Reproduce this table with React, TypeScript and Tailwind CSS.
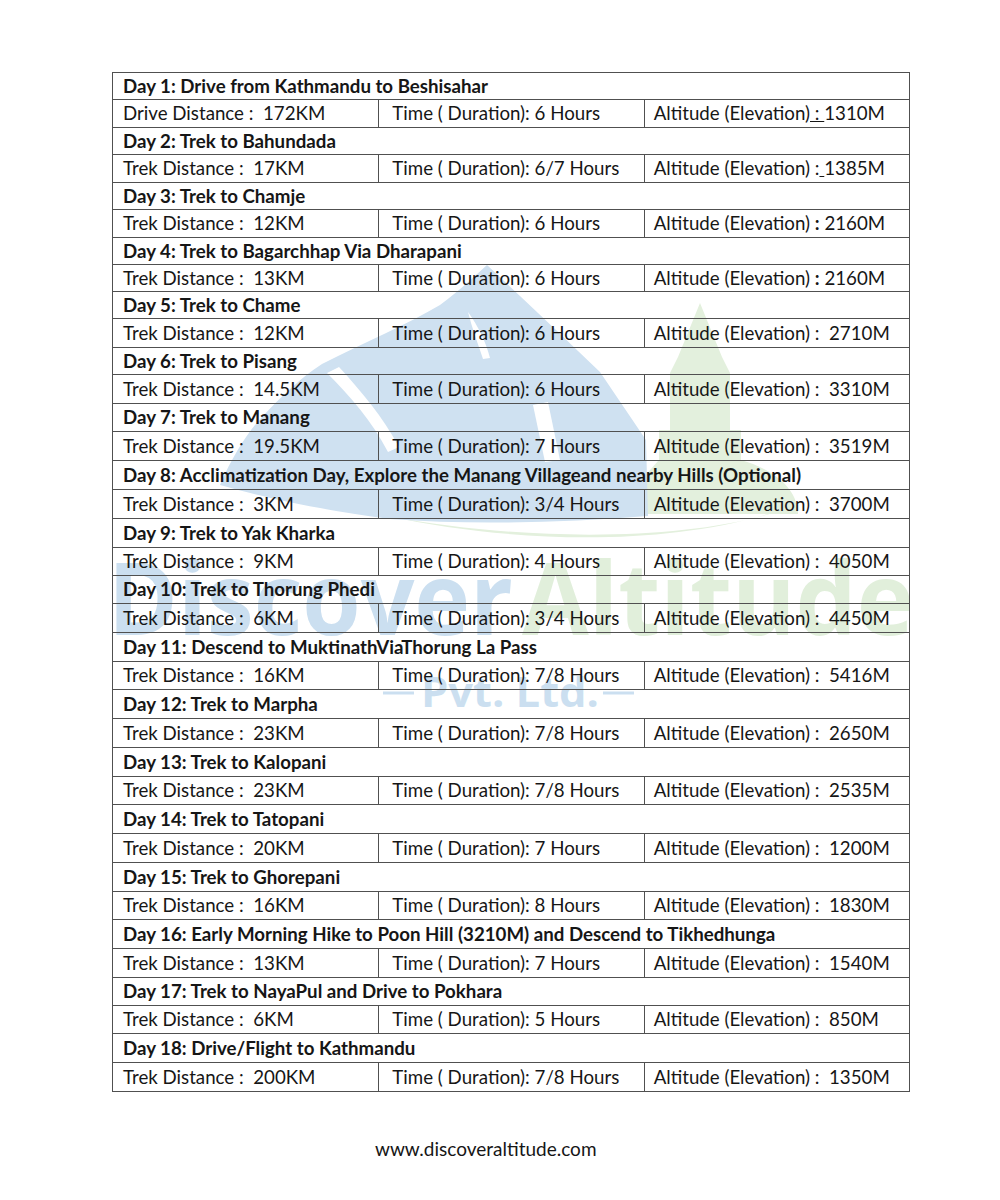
import React from "react";

type Day = {
  title: string;
  dist: string;
  time: string;
  alt: React.ReactNode;
};

const H: Record<number, string> = {
  27: "h-[27px]",
  28: "h-[28px]",
  29: "h-[29px]",
};

const heights = [
  27, 28, 27, 28, 27, 28, 27, 27, 27, 29, 27, 29, 28, 29, 29, 29, 29, 28, 28, 29, 29, 28, 29, 29, 29, 28, 29, 29, 29, 28,
  29, 29, 28, 28, 29, 29,
];

const alt = (v: string) => `Altitude (Elevation) :  ${v}`;

const days: Day[] = [
  {
    title: "Day 1: Drive from Kathmandu to Beshisahar",
    dist: "Drive Distance :  172KM",
    time: "Time ( Duration): 6 Hours",
    alt: (
      <>
        Altitude (Elevation)<span className="underline"> : </span>1310M
      </>
    ),
  },
  {
    title: "Day 2: Trek to Bahundada",
    dist: "Trek Distance :  17KM",
    time: "Time ( Duration): 6/7 Hours",
    alt: (
      <>
        Altitude (Elevation) :<span className="underline"> </span>1385M
      </>
    ),
  },
  {
    title: "Day 3: Trek to Chamje",
    dist: "Trek Distance :  12KM",
    time: "Time ( Duration): 6 Hours",
    alt: (
      <>
        Altitude (Elevation) <span className="font-bold">:</span> 2160M
      </>
    ),
  },
  {
    title: "Day 4: Trek to Bagarchhap Via Dharapani",
    dist: "Trek Distance :  13KM",
    time: "Time ( Duration): 6 Hours",
    alt: (
      <>
        Altitude (Elevation) <span className="font-bold">:</span> 2160M
      </>
    ),
  },
  { title: "Day 5: Trek to Chame", dist: "Trek Distance :  12KM", time: "Time ( Duration): 6 Hours", alt: alt("2710M") },
  { title: "Day 6: Trek to Pisang", dist: "Trek Distance :  14.5KM", time: "Time ( Duration): 6 Hours", alt: alt("3310M") },
  { title: "Day 7: Trek to Manang", dist: "Trek Distance :  19.5KM", time: "Time ( Duration): 7 Hours", alt: alt("3519M") },
  {
    title: "Day 8: Acclimatization Day, Explore the Manang Villageand nearby Hills (Optional)",
    dist: "Trek Distance :  3KM",
    time: "Time ( Duration): 3/4 Hours",
    alt: alt("3700M"),
  },
  { title: "Day 9: Trek to Yak Kharka", dist: "Trek Distance :  9KM", time: "Time ( Duration): 4 Hours", alt: alt("4050M") },
  { title: "Day 10: Trek to Thorung Phedi", dist: "Trek Distance :  6KM", time: "Time ( Duration): 3/4 Hours", alt: alt("4450M") },
  {
    title: "Day 11: Descend to MuktinathViaThorung La Pass",
    dist: "Trek Distance :  16KM",
    time: "Time ( Duration): 7/8 Hours",
    alt: alt("5416M"),
  },
  { title: "Day 12: Trek to Marpha", dist: "Trek Distance :  23KM", time: "Time ( Duration): 7/8 Hours", alt: alt("2650M") },
  { title: "Day 13: Trek to Kalopani", dist: "Trek Distance :  23KM", time: "Time ( Duration): 7/8 Hours", alt: alt("2535M") },
  { title: "Day 14: Trek to Tatopani", dist: "Trek Distance :  20KM", time: "Time ( Duration): 7 Hours", alt: alt("1200M") },
  { title: "Day 15: Trek to Ghorepani", dist: "Trek Distance :  16KM", time: "Time ( Duration): 8 Hours", alt: alt("1830M") },
  {
    title: "Day 16: Early Morning Hike to Poon Hill (3210M) and Descend to Tikhedhunga",
    dist: "Trek Distance :  13KM",
    time: "Time ( Duration): 7 Hours",
    alt: alt("1540M"),
  },
  {
    title: "Day 17: Trek to NayaPul and Drive to Pokhara",
    dist: "Trek Distance :  6KM",
    time: "Time ( Duration): 5 Hours",
    alt: alt("850M"),
  },
  { title: "Day 18: Drive/Flight to Kathmandu", dist: "Trek Distance :  200KM", time: "Time ( Duration): 7/8 Hours", alt: alt("1350M") },
];

function Watermark() {
  return (
    <svg
      className="absolute left-0 top-0 w-[1000px] h-[1200px] pointer-events-none"
      viewBox="0 0 1000 1200"
      aria-hidden="true"
    >
      {/* green swoosh */}
      <path d="M388 516 C520 545 690 548 802 502 C720 540 540 545 388 516 Z" fill="#e3f0dd" />
      {/* stupa */}
      <path
        d="M700 303 L722 357 L730 373 L730 430 L741 430 L741 460 C776 470 798 490 798 514 L630 514 C630 490 650 470 659 460 L659 430 L670 430 L670 373 L678 357 Z"
        fill="#e3f0dd"
      />
      {/* blue mountain */}
      <path
        d="M487 265 L520 296 L556 330 L600 372 L646 440 L648 516 C560 523 470 525 390 519 C320 510 262 497 220 485 C233 455 248 432 262 417 C282 396 300 378 322 364 C365 342 408 324 440 305 C460 290 475 276 487 265 Z"
        fill="#cfe1f1"
      />
      {/* snow streaks */}
      <path d="M327 373 C350 396 372 421 388 452 L399 447 C383 417 361 391 339 367 Z" fill="#ffffff" />
      <path d="M533 405 L548 402 L560 460 L545 462 Z" fill="#ffffff" />
      <path d="M468 312 C478 326 486 342 490 358 L483 359 C478 344 472 328 468 312 Z" fill="#ffffff" />
      {/* wordmark */}
      <text
        x="108"
        y="635"
        textLength="405"
        lengthAdjust="spacingAndGlyphs"
        fill="#cbdff0"
        style={{ fontFamily: "'Open Sans', sans-serif", fontWeight: 700, fontSize: "100px" }}
      >
        Discover
      </text>
      <text
        x="522"
        y="635"
        textLength="392"
        lengthAdjust="spacingAndGlyphs"
        fill="#e1efdb"
        style={{ fontFamily: "'Open Sans', sans-serif", fontWeight: 700, fontSize: "100px" }}
      >
        Altitude
      </text>
      <line x1="383" y1="693" x2="414" y2="693" stroke="#cbdff0" strokeWidth="3" />
      <line x1="603" y1="693" x2="634" y2="693" stroke="#cbdff0" strokeWidth="3" />
      <text
        x="421"
        y="707"
        textLength="178"
        lengthAdjust="spacingAndGlyphs"
        fill="#cbdff0"
        style={{ fontFamily: "'Open Sans', sans-serif", fontWeight: 700, fontSize: "42px" }}
      >
        Pvt. Ltd.
      </text>
    </svg>
  );
}

export default function App() {
  let r = 0;
  return (
    <div className="relative w-[1000px] h-[1200px] bg-white text-[#161616] font-['Lato','Carlito','Liberation_Sans',sans-serif] overflow-hidden">
      <Watermark />
      <div className="relative pt-[72px] pl-[112px]">
        <div className="w-[798px] border-l border-r border-b border-[#505050] text-[18.7px] leading-none">
          {days.map((d) => {
            const h1 = heights[r++];
            const h2 = heights[r++];
            return (
              <React.Fragment key={d.title}>
                <div className={`${H[h1]} border-t border-[#505050] flex items-center pl-[10px] font-bold whitespace-pre`}>
                  {d.title}
                </div>
                <div className={`${H[h2]} border-t border-[#505050] grid grid-cols-3 whitespace-pre`}>
                  <div className="flex items-center pl-[10px]">{d.dist}</div>
                  <div className="flex items-center pl-[13px] border-l border-[#505050]">{d.time}</div>
                  <div className="flex items-center pl-[9px] border-l border-[#505050]">{d.alt}</div>
                </div>
              </React.Fragment>
            );
          })}
        </div>
      </div>
      <div className="relative mt-[47px] pl-[375px] text-[19px] leading-none text-[#161616]">www.discoveraltitude.com</div>
    </div>
  );
}
